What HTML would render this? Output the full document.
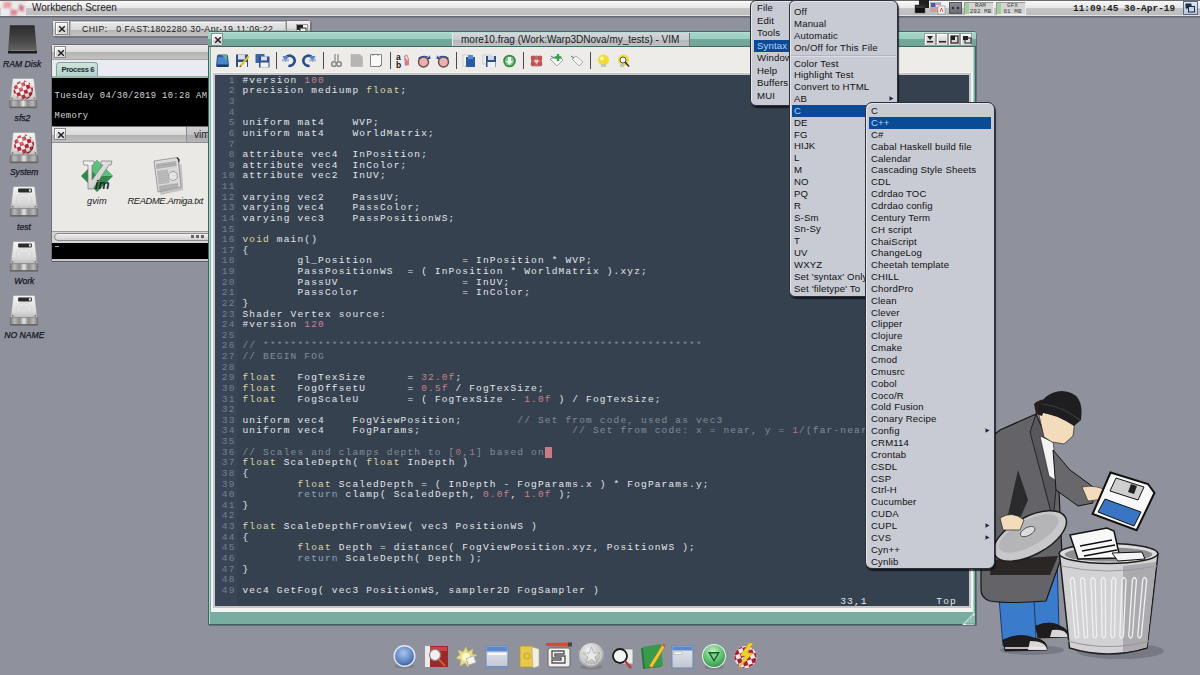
<!DOCTYPE html><html><head><meta charset="utf-8"><style>
*{box-sizing:border-box;margin:0;padding:0}
html,body{width:1200px;height:675px;overflow:hidden;background:#8f919c;font-family:"Liberation Sans",sans-serif;font-size:10px;color:#1a1a1a}
.a{position:absolute}
.topbar{left:0;top:0;width:1200px;height:18px;background:linear-gradient(#6a6a6a 0,#6a6a6a 1px,#fcfcfc 1px,#f2f2f2 3px,#e8e8e8 8px,#c6c6c6 8px,#bdbdbd 15px,#e2e2e2 15px,#e2e2e2 16px,#5e5f66 16px,#6e6f78 17px,#858791 18px)}
.code{font-family:"Liberation Mono",monospace;white-space:pre;color:#e4e6e8}
.gbar{background:linear-gradient(#eeeeee 0,#e2e2e2 45%,#b9b9b9 55%,#c4c4c4 100%);border:1px solid #6c6c6c;border-radius:2px}
.closeg{background:linear-gradient(#f6f6f6,#e2e2e2 50%,#d2d2d2 51%,#dedede);border:1px solid #8a8a8a;box-shadow:inset 1px 1px 0 #fff}

.tbar{background:linear-gradient(#3f6b62 0,#3f6b62 1px,#bfe8de 1px,#a6d6ca 2px,#9acdc0 8px,#74a99c 8px,#6fa597 15px,#3e6a60 15px,#3e6a60 16px)}
.menu{background:#c9ccd4;border:1px solid #3a3c44;border-radius:7px;box-shadow:2px 2px 0 rgba(0,0,0,.35)}
.mi{position:absolute;left:0;right:0;height:12px;line-height:12px;font-size:10px;color:#1e1e1e;white-space:pre}
.hl{background:#0a4a96;color:#dfe8ff}
</style></head><body><div class="a topbar"></div><svg class="a" style="left:0;top:0" width="26" height="16" viewBox="0 0 26 16"><defs><filter id="lgb"><feGaussianBlur stdDeviation="0.8"/></filter></defs><rect x="1" y="1" width="25" height="15" fill="#efe6ea"/><g filter="url(#lgb)"><path d="M4 2 L12 2 L11 8.5 L3 8.5 Z" fill="#eba1a2"/><path d="M12 2 L19 3 L18.5 9.5 L11 8.5 Z" fill="#e6f0ec"/><path d="M19 4 L24 6 L23.5 12.5 L18.5 10 Z" fill="#c97a8c"/><path d="M1 8.5 L10.5 8.5 L10 15.5 L1 15.5 Z" fill="#e8eef0"/><path d="M10.5 9 L18 10 L17 15.5 L10 15.5 Z" fill="#d98a94"/><path d="M18 10 L23.5 12.5 L23 15.5 L17 15.5 Z" fill="#ece6ea"/></g></svg><div class="a" style="left:32px;top:2px;font-size:10px;line-height:12px;color:#222">Workbench Screen</div><svg class="a" style="left:913px;top:0px" width="18" height="15" viewBox="0 0 18 15"><rect x="6" y="0" width="10" height="8" fill="#1e1e1e"/><rect x="2" y="5" width="10" height="8" fill="#111" stroke="#555" stroke-width="0.5"/><rect x="3" y="6" width="8" height="2" fill="#3a3a3a"/></svg><svg class="a" style="left:930px;top:2px" width="16" height="13" viewBox="0 0 16 13"><rect x="0.5" y="0.5" width="10" height="9" fill="#e8e8f0" stroke="#888" stroke-width="0.5"/><rect x="1" y="1" width="4.5" height="4" fill="#3f5fa8"/><g fill="#c94a55"><rect x="5.5" y="1.5" width="5" height="1"/><rect x="1" y="5.5" width="9.5" height="1"/><rect x="1" y="7.5" width="9.5" height="1"/></g><rect x="8" y="4" width="7" height="8" fill="#f2f2f2" stroke="#777" stroke-width="0.5"/><path d="M10 10 L11.5 6 L13 10" stroke="#c33" fill="none" stroke-width="0.8"/></svg><div class="a" style="left:949px;top:2px;width:13px;height:12px;background:linear-gradient(#8a8c94,#6b6d75);border:1px solid #55575e"></div><svg class="a" style="left:950px;top:3px" width="11" height="10"><circle cx="3" cy="5" r="1.2" fill="#2c2e34"/><circle cx="8" cy="5" r="1.2" fill="#2c2e34"/></svg><div class="a" style="left:964px;top:2px;width:30px;height:13px;background:#d4d4d4;border:1px solid #9a9a9a;border-right-color:#eee;border-bottom-color:#eee"></div><div class="a" style="left:965px;top:3px;width:4px;height:11px;background:#9fd196"></div><div class="a" style="left:967px;top:2.5px;width:27px;text-align:center;font-family:'Liberation Mono',monospace;font-size:6px;line-height:6px;color:#3a3a3a;white-space:pre">RAM<br>292 MB</div><div class="a" style="left:996px;top:2px;width:30px;height:13px;background:#d4d4d4;border:1px solid #9a9a9a;border-right-color:#eee;border-bottom-color:#eee"></div><div class="a" style="left:997px;top:3px;width:4px;height:11px;background:#9fd196"></div><div class="a" style="left:999px;top:2.5px;width:27px;text-align:center;font-family:'Liberation Mono',monospace;font-size:6px;line-height:6px;color:#3a3a3a;white-space:pre">GFX<br>61 MB</div><div class="a code" style="left:1073px;top:2.5px;font-size:9.4px;line-height:11px;color:#1e1e1e;font-weight:bold;letter-spacing:0.05px">11:09:45 30-Apr-19</div><div class="a" style="left:1183px;top:1px;width:15px;height:14px;background:linear-gradient(#dfe6f0,#b9c5d8);border:1px solid #5a6a88"></div><svg class="a" style="left:1185px;top:3px" width="11" height="10"><rect x="0.5" y="0.5" width="6" height="5" fill="#1e2a40"/><rect x="3.5" y="3.5" width="6" height="5.5" fill="#c7d3e6" stroke="#1e2a40" stroke-width="1"/></svg><svg width="0" height="0" style="position:absolute"><defs><linearGradient id="hddg" x1="0" y1="0" x2="0" y2="1"><stop offset="0" stop-color="#f4f4f4"/><stop offset="0.7" stop-color="#dcdcdc"/><stop offset="1" stop-color="#bdbdbd"/></linearGradient><linearGradient id="hddf" x1="0" y1="0" x2="1" y2="0"><stop offset="0" stop-color="#707070"/><stop offset="0.15" stop-color="#b8b8b8"/><stop offset="0.35" stop-color="#8c8c8c"/><stop offset="0.5" stop-color="#e8e8e8"/><stop offset="0.65" stop-color="#8c8c8c"/><stop offset="0.85" stop-color="#b8b8b8"/><stop offset="1" stop-color="#707070"/></linearGradient><linearGradient id="ramg" x1="0" y1="0" x2="0" y2="1"><stop offset="0" stop-color="#2a2a2a"/><stop offset="0.6" stop-color="#4a4a4a"/><stop offset="0.95" stop-color="#666"/><stop offset="1" stop-color="#222"/></linearGradient><radialGradient id="ballshade" cx="0.35" cy="0.3" r="0.75"><stop offset="0" stop-color="#fff" stop-opacity="0.55"/><stop offset="0.5" stop-color="#fff" stop-opacity="0"/><stop offset="1" stop-color="#300" stop-opacity="0.45"/></radialGradient><clipPath id="ballclip"><circle cx="15" cy="12.5" r="10"/></clipPath><symbol id="hdd" viewBox="0 0 30 32"><path d="M4 1.5 Q4 0.5 5 0.5 H25 Q26 0.5 26 1.5 L28.5 23 H1.5 Z" fill="url(#hddg)" stroke="#9a9a9a" stroke-width="0.6"/><rect x="0.8" y="23" width="28.4" height="8" rx="1" fill="url(#hddf)" stroke="#777" stroke-width="0.6"/><rect x="1.5" y="29.5" width="27" height="1.5" fill="#666"/><circle cx="3.5" cy="21" r="0.9" fill="#777"/><circle cx="26.5" cy="21" r="0.9" fill="#777"/></symbol><symbol id="ball" viewBox="0 0 30 32"><circle cx="15" cy="12.5" r="10" fill="#f3eded"/><g clip-path="url(#ballclip)" transform="rotate(-20 15 12.5)"><rect x="3" y="1" width="4" height="4" fill="#b0202c"/><rect x="3" y="9" width="4" height="4" fill="#b0202c"/><rect x="3" y="17" width="4" height="4" fill="#b0202c"/><rect x="3" y="25" width="4" height="4" fill="#b0202c"/><rect x="7" y="5" width="4" height="4" fill="#b0202c"/><rect x="7" y="13" width="4" height="4" fill="#b0202c"/><rect x="7" y="21" width="4" height="4" fill="#b0202c"/><rect x="11" y="1" width="4" height="4" fill="#b0202c"/><rect x="11" y="9" width="4" height="4" fill="#b0202c"/><rect x="11" y="17" width="4" height="4" fill="#b0202c"/><rect x="11" y="25" width="4" height="4" fill="#b0202c"/><rect x="15" y="5" width="4" height="4" fill="#b0202c"/><rect x="15" y="13" width="4" height="4" fill="#b0202c"/><rect x="15" y="21" width="4" height="4" fill="#b0202c"/><rect x="19" y="1" width="4" height="4" fill="#b0202c"/><rect x="19" y="9" width="4" height="4" fill="#b0202c"/><rect x="19" y="17" width="4" height="4" fill="#b0202c"/><rect x="19" y="25" width="4" height="4" fill="#b0202c"/><rect x="23" y="5" width="4" height="4" fill="#b0202c"/><rect x="23" y="13" width="4" height="4" fill="#b0202c"/><rect x="23" y="21" width="4" height="4" fill="#b0202c"/><rect x="27" y="1" width="4" height="4" fill="#b0202c"/><rect x="27" y="9" width="4" height="4" fill="#b0202c"/><rect x="27" y="17" width="4" height="4" fill="#b0202c"/><rect x="27" y="25" width="4" height="4" fill="#b0202c"/></g><circle cx="15" cy="12.5" r="10" fill="url(#ballshade)"/></symbol></defs></svg><svg class="a" style="left:7px;top:25px" width="31" height="29" viewBox="0 0 31 29"><path d="M3 0.3 H27.5 L30 27.5 H1 Z" fill="url(#ramg)"/><path d="M1 26 H30 V28.5 H1Z" fill="#1c1c1c"/><path d="M4 25.5 H27" stroke="#8a8a8a" stroke-width="0.8"/></svg><svg class="a" style="left:7.5px;top:78px" width="30.5" height="31" viewBox="0 0 30 32"><use href="#hdd" x="0" y="0" width="30" height="32"/><use href="#ball" x="0" y="0" width="30" height="32"/></svg><svg class="a" style="left:9px;top:131.5px" width="30" height="32" viewBox="0 0 30 32"><use href="#hdd" x="0" y="0" width="30" height="32"/><use href="#ball" x="0" y="0" width="30" height="32"/></svg><svg class="a" style="left:9px;top:186px" width="30" height="31.5" viewBox="0 0 30 32"><use href="#hdd" x="0" y="0" width="30" height="32"/><rect x="9" y="2.5" width="14" height="4" rx="1" fill="#2a2a2a"/><rect x="20" y="3.3" width="2" height="2.4" fill="#ddd"/><ellipse cx="15" cy="14" rx="8" ry="6" fill="none" stroke="#d0d0d0" stroke-width="0.8"/><path d="M12 16 V11 M15 16 V10 M18 16 V11" stroke="#cfcfcf" stroke-width="0.8"/></svg><svg class="a" style="left:9px;top:240.5px" width="30" height="31.5" viewBox="0 0 30 32"><use href="#hdd" x="0" y="0" width="30" height="32"/><rect x="9" y="2.5" width="14" height="4" rx="1" fill="#2a2a2a"/><rect x="20" y="3.3" width="2" height="2.4" fill="#ddd"/><ellipse cx="15" cy="14" rx="8" ry="6" fill="none" stroke="#d0d0d0" stroke-width="0.8"/><path d="M12 16 V11 M15 16 V10 M18 16 V11" stroke="#cfcfcf" stroke-width="0.8"/></svg><svg class="a" style="left:9px;top:295px" width="30" height="31.5" viewBox="0 0 30 32"><use href="#hdd" x="0" y="0" width="30" height="32"/><rect x="9" y="2.5" width="14" height="4" rx="1" fill="#2a2a2a"/><rect x="20" y="3.3" width="2" height="2.4" fill="#ddd"/><ellipse cx="15" cy="14" rx="8" ry="6" fill="none" stroke="#d0d0d0" stroke-width="0.8"/><path d="M12 16 V11 M15 16 V10 M18 16 V11" stroke="#cfcfcf" stroke-width="0.8"/></svg><div class="a" style="left:-17.8px;width:80px;top:59.2px;text-align:center;font-size:8.6px;line-height:10px;font-style:italic;color:#141820;white-space:pre;-webkit-text-stroke:0.25px #141820">RAM Disk</div><div class="a" style="left:-17.5px;width:80px;top:113.0px;text-align:center;font-size:8.6px;line-height:10px;font-style:italic;color:#141820;white-space:pre;-webkit-text-stroke:0.25px #141820">sfs2</div><div class="a" style="left:-15.8px;width:80px;top:167.2px;text-align:center;font-size:8.6px;line-height:10px;font-style:italic;color:#141820;white-space:pre;-webkit-text-stroke:0.25px #141820">System</div><div class="a" style="left:-16px;width:80px;top:221.5px;text-align:center;font-size:8.6px;line-height:10px;font-style:italic;color:#141820;white-space:pre;-webkit-text-stroke:0.25px #141820">test</div><div class="a" style="left:-15.7px;width:80px;top:275.8px;text-align:center;font-size:8.6px;line-height:10px;font-style:italic;color:#141820;white-space:pre;-webkit-text-stroke:0.25px #141820">Work</div><div class="a" style="left:-15.7px;width:80px;top:330.4px;text-align:center;font-size:8.6px;line-height:10px;font-style:italic;color:#141820;white-space:pre;-webkit-text-stroke:0.25px #141820">NO NAME</div><div class="a" style="left:52px;top:20px;width:259px;height:17px;background:#b9b9bb;border:1px solid #77777d;border-radius:3px;box-shadow:1px 1px 0 rgba(50,50,60,.3)"></div><div class="a" style="left:53px;top:21px;width:17px;height:15px;background:linear-gradient(#efefef,#dadada 50%,#c4c4c4 51%,#d2d2d2);border-right:1px solid #8a8a8a"></div><div class="a closeg" style="left:55px;top:22px;width:13px;height:13px"><svg style="position:absolute;left:1.5px;top:1.5px" width="8" height="8" viewBox="0 0 10 10"><path d="M1.5 1.5 L8.5 8.5 M8.5 1.5 L1.5 8.5" stroke="#1e1e1e" stroke-width="1.8"/></svg></div><div class="a" style="left:71px;top:22px;width:214px;height:14px;background:linear-gradient(#e6e6e6,#d9d9d9 50%,#b5b5b5 51%,#c3c3c3);border-top:1px solid #f6f6f6"></div><div class="a" style="left:82px;top:23.5px;font-size:8.7px;line-height:11px;color:#1b1b1b;white-space:pre;letter-spacing:0.49px">CHIP:   0 FAST:1802280 30-Apr-19 11:09:22</div><div class="a" style="left:286px;top:21px;width:24px;height:15px;background:linear-gradient(#efefef,#dadada 50%,#c4c4c4 51%,#d2d2d2);border-left:1px solid #8a8a8a"></div><div class="a" style="left:296px;top:24px;width:12px;height:11px;background:#f0f0f0;border:1px solid #999"></div><svg class="a" style="left:297px;top:25px" width="10" height="9"><rect x="0" y="0" width="6" height="5" fill="#222"/><rect x="3" y="3" width="6" height="5" fill="#eee" stroke="#333" stroke-width="1"/></svg><div class="a" style="left:51px;top:44px;width:165px;height:217px;background:#c5c5c8;border:1px solid #6e6e74;border-radius:3px 3px 0 0;box-shadow:1px 1px 0 rgba(50,50,60,.3)"></div><div class="a" style="left:52px;top:45px;width:163px;height:14px;background:linear-gradient(#eaeaea,#dcdcdc 50%,#b3b3b3 51%,#c2c2c2)"></div><div class="a closeg" style="left:54px;top:46px;width:12px;height:12px"><svg style="position:absolute;left:1.5px;top:1.5px" width="8" height="8" viewBox="0 0 10 10"><path d="M1.5 1.5 L8.5 8.5 M8.5 1.5 L1.5 8.5" stroke="#1e1e1e" stroke-width="1.8"/></svg></div><div class="a" style="left:52px;top:59px;width:163px;height:19px;background:#e9ebf0;border-top:1px solid #a5a5a5"></div><div class="a" style="left:56px;top:62px;width:42px;height:16px;background:linear-gradient(#cfe3df,#afcfc8);border:1px solid #7fa49c;border-bottom:none;border-radius:4px 4px 0 0"></div><div class="a" style="left:61.5px;top:64.5px;font-size:7.6px;line-height:10px;font-weight:bold;color:#1b2b2b;letter-spacing:-0.35px;white-space:pre">Process 6</div><div class="a" style="left:52px;top:76px;width:163px;height:2px;background:#93b8b0"></div><div class="a" style="left:52px;top:78px;width:163px;height:48px;background:#000"></div><div class="a code" style="left:54.5px;top:90.8px;font-size:8.8px;line-height:10px;letter-spacing:0.38px;color:#d6d6d6">Tuesday 04/30/2019 10:28 AM</div><div class="a code" style="left:54.5px;top:111.3px;font-size:8.8px;line-height:10px;letter-spacing:0.38px;color:#d6d6d6">Memory</div><div class="a" style="left:51px;top:126px;width:165px;height:135px;background:#b8b8bb;border:1px solid #6e6e74;border-radius:3px 3px 0 0;box-shadow:1px 1px 0 rgba(50,50,60,.35)"></div><div class="a" style="left:52px;top:127px;width:134px;height:15px;background:linear-gradient(#e8e8e8,#dadada 50%,#b0b0b0 51%,#c0c0c0)"></div><div class="a closeg" style="left:54px;top:128px;width:12px;height:12px"><svg style="position:absolute;left:1.5px;top:1.5px" width="8" height="8" viewBox="0 0 10 10"><path d="M1.5 1.5 L8.5 8.5 M8.5 1.5 L1.5 8.5" stroke="#1e1e1e" stroke-width="1.8"/></svg></div><div class="a" style="left:186px;top:127px;width:29px;height:15px;background:linear-gradient(#cfcfd2,#c3c3c6 50%,#aaaaae 51%,#b4b4b8);border-left:1px solid #8d8d90"></div><div class="a" style="left:194px;top:129px;font-size:10px;line-height:12px;color:#1b1b1b">vim</div><div class="a" style="left:52px;top:142px;width:163px;height:89px;background:#ebe9e6;border-top:1px solid #8f8f8f"></div><div class="a" style="left:52px;top:231px;width:163px;height:12px;background:#d4d4d6;border-top:1px solid #9a9a9a"></div><div class="a" style="left:54px;top:233px;width:161px;height:8px;background:linear-gradient(#f2f2f2,#cfcfcf);border:1px solid #8b8b8b;border-radius:4px"></div><div class="a" style="left:191px;top:235px;width:14px;height:3px;background:repeating-linear-gradient(90deg,#666 0,#666 3px,transparent 3px,transparent 5px)"></div><div class="a" style="left:52px;top:243px;width:163px;height:16px;background:#000"></div><div class="a" style="left:55px;top:246px;width:4px;height:1px;background:#aaa"></div><div class="a" style="left:52px;top:259px;width:163px;height:2px;background:#c9c9cc"></div><svg class="a" style="left:79px;top:158px" width="36" height="36" viewBox="0 0 36 36"><defs><linearGradient id="vg" x1="0" y1="0" x2="1" y2="1"><stop offset="0" stop-color="#fafafa"/><stop offset="1" stop-color="#b8b8b8"/></linearGradient></defs><path d="M18 2 L34 18 L18 34 L2 18 Z" fill="#2f8a4a"/><path d="M18 2 L34 18 L18 18 L10 10 Z" fill="#5cc07a"/><path d="M4 3 H15 L15 7 L13 7 L13 22 L24 7 L22 7 L22 3 H33 L32 7 L30 7 L14 31 L9 31 L9 7 L5 7 Z" fill="url(#vg)" stroke="#7a7a7a" stroke-width="0.7"/><text x="16" y="31" font-family="Liberation Sans" font-style="italic" font-weight="bold" font-size="12.5" fill="#1e2a22">im</text></svg><div class="a" style="left:87px;top:195.5px;font-size:9.3px;line-height:11px;font-style:italic;color:#222">gvim</div><svg class="a" style="left:151px;top:156px" width="32" height="40" viewBox="0 0 32 40"><path d="M3 5 L26 1.5 L27 6 L29 8 L31 33 L8 38 Z" fill="#7a7a7a" opacity="0.35" transform="translate(1.5 1)"/><path d="M3 5 L26 1.5 L28 4 L27.5 6 L30 31 L7 36 Z" fill="#dcdcdc" stroke="#8a8a8a" stroke-width="0.8"/><path d="M5 8 L25 5 L25.5 10 L5.5 13 Z" fill="#a8a8a8"/><path d="M6 15 L17 13.5 L18.5 27 L7.5 28.5 Z" fill="#b4b4b4"/><circle cx="22" cy="20" r="4.5" fill="#e8e8e8" stroke="#9a9a9a" stroke-width="1"/><path d="M8 30 L27 27 L27.5 32 L8.5 35 Z" fill="#aaaaaa"/><g stroke="#c8c8c8" stroke-width="0.5"><path d="M6.0 9.0 L26.0 6.0"/><path d="M6.1 11.6 L26.2 8.6"/><path d="M6.2 14.2 L26.4 11.2"/><path d="M6.3 16.8 L26.6 13.8"/><path d="M6.4 19.4 L26.8 16.4"/><path d="M6.5 22.0 L27.0 19.0"/><path d="M6.6 24.6 L27.2 21.6"/><path d="M6.7 27.2 L27.4 24.2"/><path d="M6.8 29.8 L27.6 26.8"/><path d="M6.9 32.400000000000006 L27.8 29.400000000000002"/></g><path d="M26 1.5 L28 4 L27.5 6" fill="none" stroke="#333" stroke-width="1.4"/></svg><div class="a" style="left:127.5px;top:195.5px;font-size:9.3px;line-height:11px;font-style:italic;color:#222;letter-spacing:-0.35px;white-space:pre">README.Amiga.txt</div><div class="a" style="left:208px;top:31px;width:768px;height:594px;background:#78ad9f;border:1px solid #3c665d;border-radius:3px 3px 0 0;box-shadow:1px 1px 0 rgba(40,40,50,.35)"></div><div class="a tbar" style="left:208px;top:31px;width:768px;height:16px;border-radius:3px 3px 0 0"></div><div class="a" style="left:209px;top:47px;width:1px;height:577px;background:#a9d5ca"></div><div class="a" style="left:973px;top:47px;width:1px;height:577px;background:#a9d5ca"></div><div class="a closeg" style="left:211px;top:33px;width:12px;height:13px"><svg style="position:absolute;left:1.5px;top:1.5px" width="8" height="8" viewBox="0 0 10 10"><path d="M1.5 1.5 L8.5 8.5 M8.5 1.5 L1.5 8.5" stroke="#1e1e1e" stroke-width="1.8"/></svg></div><div class="a" style="left:452px;top:33px;width:238px;height:13px;background:linear-gradient(#d6d7dc,#c9cace 50%,#b4b6bb 51%,#bfc1c5);border-left:1px solid #e8e8ea;border-right:1px solid #777"></div><div class="a" style="left:461px;top:34px;font-size:10px;line-height:12px;color:#1b1b1b;white-space:pre">more10.frag (Work:Warp3DNova/my_tests) - VIM</div><div class="a" style="left:924px;top:33px;width:12px;height:13px;background:linear-gradient(#f2f2f2,#dedede 50%,#d0d0d0 51%,#dadada);border:1px solid #9a9a9a;box-shadow:inset 1px 1px 0 #fff"></div><div class="a" style="left:936px;top:33px;width:12px;height:13px;background:linear-gradient(#f2f2f2,#dedede 50%,#d0d0d0 51%,#dadada);border:1px solid #9a9a9a;box-shadow:inset 1px 1px 0 #fff"></div><div class="a" style="left:948px;top:33px;width:12px;height:13px;background:linear-gradient(#f2f2f2,#dedede 50%,#d0d0d0 51%,#dadada);border:1px solid #9a9a9a;box-shadow:inset 1px 1px 0 #fff"></div><div class="a" style="left:960px;top:33px;width:12px;height:13px;background:linear-gradient(#f2f2f2,#dedede 50%,#d0d0d0 51%,#dadada);border:1px solid #9a9a9a;box-shadow:inset 1px 1px 0 #fff"></div><svg class="a" style="left:924px;top:33px" width="50" height="13" viewBox="0 0 50 13"><path d="M3 3h6l-3 4z" fill="#222"/><rect x="3" y="8" width="6" height="1.5" fill="#222"/><rect x="15" y="8" width="7" height="1.5" fill="#222"/><rect x="27" y="3" width="7" height="7" fill="none" stroke="#222" stroke-width="1.2"/><rect x="27" y="3" width="4" height="4" fill="#222"/><rect x="41" y="5" width="6" height="5" fill="#ddd" stroke="#222" stroke-width="1"/><rect x="39" y="3" width="5" height="4" fill="#222"/></svg><div class="a" style="left:211px;top:47px;width:762px;height:26px;background:#eeece9;border-bottom:1px solid #b8b8b8"></div><div class="a" style="left:211px;top:72px;width:762px;height:540px;background:#f3f3f3"></div><div class="a" style="left:213px;top:73px;width:758px;height:535px;background:#c7c7c7"></div><div class="a" style="left:215px;top:75px;width:754px;height:531px;background:#364150"></div><svg class="a" style="left:215px;top:53px" width="15" height="15" viewBox="0 0 15 15"><path d="M2 3 Q2 1.5 3.5 1.5 H11.5 Q13 1.5 13 3 L14 12.5 Q14 14 12.5 14 H2.5 Q1 14 1 12.5 Z" fill="#2c5a9c"/><path d="M3 4 H12 L12.8 11 H2.2Z" fill="#4a86c8"/><path d="M7 2 L12 2 L12 8 Z" fill="#5fb08a"/><rect x="2" y="12" width="11" height="2" fill="#1c3a6a"/></svg><svg class="a" style="left:235px;top:53px" width="15" height="15" viewBox="0 0 15 15"><rect x="1" y="1.5" width="12" height="12.5" fill="#2c4f8a"/><rect x="3" y="1.5" width="7" height="5" fill="#d8dde8"/><rect x="3" y="9" width="9" height="5" fill="#f0f0f0"/><path d="M5 12 L13 2.5 L14.5 4 L6.5 13.5 Z" fill="#e8c020"/><path d="M5 12 L6.5 13.5 L4.5 14Z" fill="#333"/></svg><svg class="a" style="left:255px;top:53px" width="15" height="15" viewBox="0 0 15 15"><rect x="0.5" y="1" width="9" height="9" fill="#3c64a8"/><rect x="4" y="3.5" width="10.5" height="11" fill="#2d4f8c"/><rect x="6" y="3.5" width="6" height="4" fill="#d8dde8"/><rect x="5.5" y="9.5" width="8" height="5" fill="#f2f2f2"/></svg><div class="a" style="left:275.5px;top:52px;width:1px;height:17px;background:#4a4a4a"></div><svg class="a" style="left:282px;top:53px" width="15" height="15" viewBox="0 0 15 15"><path d="M3 5 Q7 1 11 4 Q14.5 7.5 11 11.5 Q8.5 13.5 6.5 12.5" fill="none" stroke="#2a4d8c" stroke-width="2.6"/><path d="M0.5 3 L6.5 3 L3.5 9Z" fill="#5a82c0"/><rect x="0" y="6" width="7" height="2.5" fill="#8aa6d0" opacity=".7"/></svg><svg class="a" style="left:301px;top:53px" width="15" height="15" viewBox="0 0 15 15"><path d="M12 5 Q8 1 4 4 Q0.5 7.5 4 11.5 Q6.5 13.5 8.5 12.5" fill="none" stroke="#2a4d8c" stroke-width="2.6"/><path d="M14.5 3 L8.5 3 L11.5 9Z" fill="#5a82c0"/><rect x="8" y="6" width="7" height="2.5" fill="#8aa6d0" opacity=".7"/></svg><div class="a" style="left:322.5px;top:52px;width:1px;height:17px;background:#4a4a4a"></div><svg class="a" style="left:329px;top:53px" width="15" height="15" viewBox="0 0 15 15"><path d="M6 1 V8 M9 1 V8" stroke="#9a9a9a" stroke-width="1.5"/><circle cx="5" cy="11" r="2.3" fill="none" stroke="#8a8a8a" stroke-width="1.6"/><circle cx="10" cy="11" r="2.3" fill="none" stroke="#8a8a8a" stroke-width="1.6"/></svg><svg class="a" style="left:349px;top:53px" width="15" height="15" viewBox="0 0 15 15"><path d="M2 1.5 H11 L13.5 4 V13.5 H2Z" fill="#b5b5b5" stroke="#aaa" stroke-width="0.5"/></svg><svg class="a" style="left:369px;top:53px" width="15" height="15" viewBox="0 0 15 15"><path d="M1.5 1.5 H12.5 V12 L11 13.5 H1.5Z" fill="#fafafa" stroke="#777" stroke-width="0.9"/><path d="M11 13.5 L12.5 12 H11Z" fill="#333"/><path d="M4 1 V3 M9 1 V3" stroke="#777" stroke-width="0.8"/></svg><div class="a" style="left:389.5px;top:52px;width:1px;height:17px;background:#4a4a4a"></div><svg class="a" style="left:396px;top:53px" width="15" height="15" viewBox="0 0 15 15"><text x="0" y="7" font-family="Liberation Sans" font-weight="bold" font-size="8.5" fill="#111">a</text><text x="0" y="14.5" font-family="Liberation Sans" font-weight="bold" font-size="8.5" fill="#111">b</text><path d="M8 3 L11 1.5 L13 6 L13 12 L9 13 Z" fill="#d67d87"/><path d="M9 4 L11 3 L12 8 Z" fill="#f5f5f5"/></svg><svg class="a" style="left:416px;top:53px" width="15" height="15" viewBox="0 0 15 15"><circle cx="7.5" cy="9" r="5" fill="#e8b0b0" stroke="#6a4a4a" stroke-width="1.4"/><path d="M2 5 Q7 1 13 4 L14 2 L14.5 6 L10.5 6 L12 4.5 Q7 2.5 3 6Z" fill="#2a4d9c"/></svg><svg class="a" style="left:436px;top:53px" width="15" height="15" viewBox="0 0 15 15"><circle cx="7.5" cy="9" r="5" fill="#e8b0b0" stroke="#6a4a4a" stroke-width="1.4"/><path d="M13 5 Q8 1 2 4 L1 2 L0.5 6 L4.5 6 L3 4.5 Q8 2.5 12 6Z" fill="#2a4d9c"/></svg><div class="a" style="left:456px;top:52px;width:1px;height:17px;background:#4a4a4a"></div><svg class="a" style="left:462px;top:53px" width="15" height="15" viewBox="0 0 15 15"><rect x="1" y="2" width="8" height="11" fill="#f2f2f2" stroke="#aaa" stroke-width="0.5"/><rect x="4" y="4" width="9" height="10" fill="#2c5aa0"/><rect x="6" y="2" width="5" height="4" fill="#5a8ad0"/></svg><svg class="a" style="left:482px;top:53px" width="15" height="15" viewBox="0 0 15 15"><rect x="1" y="2" width="8" height="9" fill="#eee" stroke="#aaa" stroke-width="0.5"/><rect x="4" y="3" width="10" height="11" fill="#2d4f8c"/><rect x="6" y="3" width="6" height="4" fill="#d0d6e2"/><rect x="5.5" y="9" width="8" height="5" fill="#f2f2f2"/></svg><svg class="a" style="left:502px;top:53px" width="15" height="15" viewBox="0 0 15 15"><circle cx="7.5" cy="8" r="6.3" fill="#3a8a4c"/><circle cx="7.5" cy="8" r="4.5" fill="#7cc88a"/><path d="M6 4 H9 V8 H11 L7.5 12 L4 8 H6Z" fill="#e8f8ea"/></svg><div class="a" style="left:522.5px;top:52px;width:1px;height:17px;background:#4a4a4a"></div><svg class="a" style="left:529px;top:53px" width="15" height="15" viewBox="0 0 15 15"><circle cx="7.5" cy="8" r="5.5" fill="#c86a6a"/><circle cx="4" cy="5" r="2.4" fill="#b55"/><circle cx="11" cy="5" r="2.4" fill="#b55"/><circle cx="4" cy="11" r="2.4" fill="#b55"/><circle cx="11" cy="11" r="2.4" fill="#b55"/><path d="M7.5 11 L5 8 Q5 6 7.5 7 Q10 6 10 8Z" fill="#f2c8c8"/></svg><svg class="a" style="left:549px;top:53px" width="15" height="15" viewBox="0 0 15 15"><path d="M1 6 L8 13 L14 7 L10 3 Z" fill="#f5f5f5" stroke="#999" stroke-width="0.8"/><path d="M9 1 V8 M5.5 4.5 H12.5" stroke="#3aa050" stroke-width="2.4"/><path d="M2 3 L5 5" stroke="#444" stroke-width="0.8"/></svg><svg class="a" style="left:569px;top:53px" width="15" height="15" viewBox="0 0 15 15"><path d="M3 6 L10 13 L14 9 L7 3 Z" fill="#f5f5f5" stroke="#999" stroke-width="0.8"/><path d="M2 3 L5 5" stroke="#444" stroke-width="0.8"/></svg><div class="a" style="left:589.5px;top:52px;width:1px;height:17px;background:#4a4a4a"></div><svg class="a" style="left:596px;top:53px" width="15" height="15" viewBox="0 0 15 15"><circle cx="7.5" cy="7" r="5.5" fill="#f2dc3a"/><circle cx="6" cy="5.5" r="2" fill="#fff6a0"/><rect x="5" y="11" width="5" height="3" fill="#c8c8b0"/></svg><svg class="a" style="left:616px;top:53px" width="15" height="15" viewBox="0 0 15 15"><circle cx="7.5" cy="7" r="5.5" fill="#f2dc3a"/><circle cx="7" cy="7" r="3" fill="#fff" stroke="#555" stroke-width="1"/><path d="M9 9 L13 13.5" stroke="#333" stroke-width="1.6"/><rect x="4" y="11" width="4" height="3" fill="#c8c8b0"/></svg><svg class="a" style="left:962px;top:613px" width="13" height="12"><path d="M12 0.5 V11.5 H1 Z" fill="#8fc2b4" stroke="#e8f4f0" stroke-width="1"/><path d="M12 3 V11 H4" fill="none" stroke="#5a8a7e" stroke-width="0.8"/></svg><div class="a" style="left:215px;top:75px;width:22px;height:531px;background:#394556"></div><div class="a code" id="code" style="left:215.0px;top:75.8px;width:754px;height:531px;overflow:hidden;font-size:9.5px;line-height:10.627px;letter-spacing:1.17px"><div style="height:10.627px"><span style="color:#74808c">  1 </span>#version <span style="color:#c9808c">100</span></div><div style="height:10.627px"><span style="color:#74808c">  2 </span>precision mediump <span style="color:#ddd6a0">float</span>;</div><div style="height:10.627px"><span style="color:#74808c">  3 </span></div><div style="height:10.627px"><span style="color:#74808c">  4 </span></div><div style="height:10.627px"><span style="color:#74808c">  5 </span>uniform mat4    WVP;</div><div style="height:10.627px"><span style="color:#74808c">  6 </span>uniform mat4    WorldMatrix;</div><div style="height:10.627px"><span style="color:#74808c">  7 </span></div><div style="height:10.627px"><span style="color:#74808c">  8 </span>attribute vec4  InPosition;</div><div style="height:10.627px"><span style="color:#74808c">  9 </span>attribute vec4  InColor;</div><div style="height:10.627px"><span style="color:#74808c"> 10 </span>attribute vec2  InUV;</div><div style="height:10.627px"><span style="color:#74808c"> 11 </span></div><div style="height:10.627px"><span style="color:#74808c"> 12 </span>varying vec2    PassUV;</div><div style="height:10.627px"><span style="color:#74808c"> 13 </span>varying vec4    PassColor;</div><div style="height:10.627px"><span style="color:#74808c"> 14 </span>varying vec3    PassPositionWS;</div><div style="height:10.627px"><span style="color:#74808c"> 15 </span></div><div style="height:10.627px"><span style="color:#74808c"> 16 </span><span style="color:#ddd6a0">void</span> main()</div><div style="height:10.627px"><span style="color:#74808c"> 17 </span>{</div><div style="height:10.627px"><span style="color:#74808c"> 18 </span>        gl_Position             = InPosition * WVP;</div><div style="height:10.627px"><span style="color:#74808c"> 19 </span>        PassPositionWS  = ( InPosition * WorldMatrix ).xyz;</div><div style="height:10.627px"><span style="color:#74808c"> 20 </span>        PassUV                  = InUV;</div><div style="height:10.627px"><span style="color:#74808c"> 21 </span>        PassColor               = InColor;</div><div style="height:10.627px"><span style="color:#74808c"> 22 </span>}</div><div style="height:10.627px"><span style="color:#74808c"> 23 </span>Shader Vertex source:</div><div style="height:10.627px"><span style="color:#74808c"> 24 </span>#version <span style="color:#c9808c">120</span></div><div style="height:10.627px"><span style="color:#74808c"> 25 </span></div><div style="height:10.627px"><span style="color:#74808c"> 26 </span><span style="color:#848c97">// ****************************************************************</span></div><div style="height:10.627px"><span style="color:#74808c"> 27 </span><span style="color:#848c97">// BEGIN FOG</span></div><div style="height:10.627px"><span style="color:#74808c"> 28 </span></div><div style="height:10.627px"><span style="color:#74808c"> 29 </span><span style="color:#ddd6a0">float</span>   FogTexSize      = <span style="color:#c9808c">32.0f</span>;</div><div style="height:10.627px"><span style="color:#74808c"> 30 </span><span style="color:#ddd6a0">float</span>   FogOffsetU      = <span style="color:#c9808c">0.5f</span> / FogTexSize;</div><div style="height:10.627px"><span style="color:#74808c"> 31 </span><span style="color:#ddd6a0">float</span>   FogScaleU       = ( FogTexSize - <span style="color:#c9808c">1.0f</span> ) / FogTexSize;</div><div style="height:10.627px"><span style="color:#74808c"> 32 </span></div><div style="height:10.627px"><span style="color:#74808c"> 33 </span>uniform vec4    FogViewPosition;        <span style="color:#848c97">// Set from code, used as vec3</span></div><div style="height:10.627px"><span style="color:#74808c"> 34 </span>uniform vec4    FogParams;                      <span style="color:#848c97">// Set from code: x = near, y = <span style="color:#b3717d">1</span>/(far-near)</span></div><div style="height:10.627px"><span style="color:#74808c"> 35 </span></div><div style="height:10.627px"><span style="color:#74808c"> 36 </span><span style="color:#848c97">// Scales and clamps depth to [<span style="color:#b3717d">0</span>,<span style="color:#b3717d">1</span>] based on</span><span style="background:#c97a87;color:#c97a87"> </span></div><div style="height:10.627px"><span style="color:#74808c"> 37 </span><span style="color:#ddd6a0">float</span> ScaleDepth( <span style="color:#ddd6a0">float</span> InDepth )</div><div style="height:10.627px"><span style="color:#74808c"> 38 </span>{</div><div style="height:10.627px"><span style="color:#74808c"> 39 </span>        <span style="color:#ddd6a0">float</span> ScaledDepth = ( InDepth - FogParams.x ) * FogParams.y;</div><div style="height:10.627px"><span style="color:#74808c"> 40 </span>        <span style="color:#93a6c4">return</span> clamp( ScaledDepth, <span style="color:#c9808c">0.0f</span>, <span style="color:#c9808c">1.0f</span> );</div><div style="height:10.627px"><span style="color:#74808c"> 41 </span>}</div><div style="height:10.627px"><span style="color:#74808c"> 42 </span></div><div style="height:10.627px"><span style="color:#74808c"> 43 </span><span style="color:#ddd6a0">float</span> ScaleDepthFromView( vec3 PositionWS )</div><div style="height:10.627px"><span style="color:#74808c"> 44 </span>{</div><div style="height:10.627px"><span style="color:#74808c"> 45 </span>        <span style="color:#ddd6a0">float</span> Depth = distance( FogViewPosition.xyz, PositionWS );</div><div style="height:10.627px"><span style="color:#74808c"> 46 </span>        <span style="color:#93a6c4">return</span> ScaleDepth( Depth );</div><div style="height:10.627px"><span style="color:#74808c"> 47 </span>}</div><div style="height:10.627px"><span style="color:#74808c"> 48 </span></div><div style="height:10.627px"><span style="color:#74808c"> 49 </span>vec4 GetFog( vec3 PositionWS, sampler2D FogSampler )</div></div><div class="a code" style="left:840.17px;top:596.52px;font-size:9.5px;line-height:10.627px;letter-spacing:1.17px">33,1</div><div class="a code" style="left:936.35px;top:596.52px;font-size:9.5px;line-height:10.627px;letter-spacing:1.17px">Top</div><svg width="0" height="0" style="position:absolute"><defs><radialGradient id="dk1" cx="0.45" cy="0.35" r="0.7"><stop offset="0" stop-color="#a9c4ea"/><stop offset="0.7" stop-color="#5a82c0"/><stop offset="1" stop-color="#33548c"/></radialGradient><radialGradient id="dk7" cx="0.4" cy="0.3" r="0.8"><stop offset="0" stop-color="#f4f4f4"/><stop offset="0.7" stop-color="#b8b8b8"/><stop offset="1" stop-color="#7a7a7a"/></radialGradient><radialGradient id="dk11" cx="0.45" cy="0.3" r="0.75"><stop offset="0" stop-color="#c6f0c6"/><stop offset="0.6" stop-color="#5cc070"/><stop offset="1" stop-color="#2f8a44"/></radialGradient><linearGradient id="dkw" x1="0" y1="0" x2="0" y2="1"><stop offset="0" stop-color="#e6e8ee"/><stop offset="1" stop-color="#c0c6d2"/></linearGradient><clipPath id="dkbc"><circle cx="11.5" cy="13" r="11"/></clipPath></defs></svg><svg class="a" style="left:392px;top:644px" width="25" height="25" viewBox="0 0 25 25"><ellipse cx="12.5" cy="22" rx="10" ry="2.5" fill="#6a6c78" opacity=".5"/><circle cx="12.5" cy="12" r="11" fill="#dfe6f2"/><circle cx="12.5" cy="12" r="9.5" fill="url(#dk1)"/></svg><svg class="a" style="left:424px;top:645px" width="25" height="24" viewBox="0 0 25 24"><rect x="4" y="1" width="20" height="21" fill="#9a2a2a"/><rect x="5" y="2" width="18" height="4" fill="#c04848"/><path d="M1 1 H6 V22 H1Z" fill="#f0e8e8"/><circle cx="11" cy="10" r="5.5" fill="#f4eeee" stroke="#888" stroke-width="1.2"/><path d="M14.5 14 L21 21" stroke="#c86a3a" stroke-width="1.8"/></svg><svg class="a" style="left:455px;top:646px" width="23" height="22" viewBox="0 0 23 22"><path d="M11 1 L13 6 L18 3 L17 8 L22 9 L18 12 L21 17 L15 16 L13 21 L10 17 L5 20 L6 14 L1 12 L5 9 L3 4 L8 6Z" fill="#e8dd8a" stroke="#c8b860" stroke-width="0.6"/><circle cx="11" cy="11" r="4" fill="#fff8c8"/><rect x="12" y="11" width="8" height="7" fill="#f4f4f4" stroke="#999" stroke-width="0.6" transform="rotate(-20 16 14)"/></svg><svg class="a" style="left:485px;top:645px" width="24" height="24" viewBox="0 0 24 24"><rect x="1" y="1" width="22" height="22" fill="url(#dkw)" stroke="#6a88b8" stroke-width="1"/><rect x="1.5" y="1.5" width="21" height="5" fill="#5a88cc"/><rect x="3" y="8" width="18" height="2" fill="#fff" opacity=".8"/><rect x="1.5" y="21" width="21" height="1.5" fill="#6a88b8"/></svg><svg class="a" style="left:518px;top:644px" width="23" height="25" viewBox="0 0 23 25"><path d="M2 2 H14 L16 4 V23 H2Z" fill="#e8c84a" stroke="#b8982a" stroke-width="0.8"/><path d="M14 3 L21 5 V22 L15 24 Z" fill="#f4f0e0" stroke="#aaa" stroke-width="0.6"/><circle cx="9" cy="12" r="3" fill="none" stroke="#b8982a" stroke-width="0.8"/></svg><svg class="a" style="left:544px;top:641px" width="30" height="28" viewBox="0 0 30 28"><rect x="4" y="7" width="22" height="19" rx="2" fill="#f0f0f0" stroke="#666" stroke-width="1"/><path d="M8 10 H20 V13 H11 V15 H21 V22 H8 V19 H17 V17 H8Z" fill="none" stroke="#555" stroke-width="1.4"/><path d="M2 2 L26 1.5 L28 3.5 L26 5.5 L2 5Z" fill="#d84a2a"/><rect x="24" y="1.5" width="4" height="4" fill="#444"/></svg><svg class="a" style="left:578px;top:643px" width="27" height="27" viewBox="0 0 27 27"><ellipse cx="13.5" cy="24" rx="11" ry="2.5" fill="#6a6c78" opacity=".5"/><circle cx="13.5" cy="12.5" r="12.5" fill="url(#dk7)"/><circle cx="13.5" cy="12.5" r="9.5" fill="none" stroke="#d8d8d8" stroke-width="1"/><path d="M13.5 4 L15.8 10 L22 10.2 L17 14 L18.8 20 L13.5 16.5 L8.2 20 L10 14 L5 10.2 L11.2 10Z" fill="#e8e8e8" stroke="#9a9a9a" stroke-width="0.6"/></svg><svg class="a" style="left:610px;top:646px" width="24" height="24" viewBox="0 0 24 24"><rect x="6" y="3" width="17" height="15" fill="#eaeaea" stroke="#888" stroke-width="0.8"/><circle cx="10" cy="10" r="7" fill="#f4f4f4" stroke="#1a1a1a" stroke-width="1.8"/><path d="M15 15 L21 22" stroke="#b83a3a" stroke-width="2.4"/></svg><svg class="a" style="left:639px;top:642px" width="27" height="28" viewBox="0 0 27 28"><path d="M2 6 L20 3 L22 25 L4 27Z" fill="#2c7a3a"/><path d="M4 5 L22 2 L24 24 L6 26Z" fill="#3a9a4c"/><path d="M10 24 L23 3 L26 5 L13 26Z" fill="#e8c83a" stroke="#8a7020" stroke-width="0.6"/><path d="M23 3 L24.5 1.5 L26.5 3 L26 5Z" fill="#c85a4a"/></svg><svg class="a" style="left:671px;top:645px" width="23" height="24" viewBox="0 0 23 24"><rect x="1" y="1" width="21" height="22" fill="url(#dkw)" stroke="#6a88b8" stroke-width="1"/><rect x="1.5" y="1.5" width="20" height="4" fill="#5a88cc"/><rect x="3" y="7" width="8" height="2.5" fill="#fafafa" stroke="#888" stroke-width="0.4"/></svg><svg class="a" style="left:701px;top:643px" width="26" height="27" viewBox="0 0 26 27"><ellipse cx="13" cy="24" rx="10" ry="2.5" fill="#6a6c78" opacity=".5"/><circle cx="13" cy="13" r="12" fill="#eaf6ea"/><circle cx="13" cy="13" r="11" fill="url(#dk11)"/><path d="M7 9 H19 L13 19Z" fill="#1c5a2a"/><path d="M9.5 10.5 H16.5 L13 16.5Z" fill="#7cd08a"/></svg><svg class="a" style="left:733px;top:642px" width="25" height="28" viewBox="0 0 25 28"><g transform="translate(1 2)"><circle cx="11.5" cy="13" r="11" fill="#f4eaea"/><g clip-path="url(#dkbc)" transform="rotate(-20 11.5 13)"><rect x="-2.0" y="-1.0" width="4.5" height="4.5" fill="#a82030"/><rect x="-2.0" y="8.0" width="4.5" height="4.5" fill="#a82030"/><rect x="-2.0" y="17.0" width="4.5" height="4.5" fill="#a82030"/><rect x="-2.0" y="26.0" width="4.5" height="4.5" fill="#a82030"/><rect x="2.5" y="3.5" width="4.5" height="4.5" fill="#a82030"/><rect x="2.5" y="12.5" width="4.5" height="4.5" fill="#a82030"/><rect x="2.5" y="21.5" width="4.5" height="4.5" fill="#a82030"/><rect x="7.0" y="-1.0" width="4.5" height="4.5" fill="#a82030"/><rect x="7.0" y="8.0" width="4.5" height="4.5" fill="#a82030"/><rect x="7.0" y="17.0" width="4.5" height="4.5" fill="#a82030"/><rect x="7.0" y="26.0" width="4.5" height="4.5" fill="#a82030"/><rect x="11.5" y="3.5" width="4.5" height="4.5" fill="#a82030"/><rect x="11.5" y="12.5" width="4.5" height="4.5" fill="#a82030"/><rect x="11.5" y="21.5" width="4.5" height="4.5" fill="#a82030"/><rect x="16.0" y="-1.0" width="4.5" height="4.5" fill="#a82030"/><rect x="16.0" y="8.0" width="4.5" height="4.5" fill="#a82030"/><rect x="16.0" y="17.0" width="4.5" height="4.5" fill="#a82030"/><rect x="16.0" y="26.0" width="4.5" height="4.5" fill="#a82030"/><rect x="20.5" y="3.5" width="4.5" height="4.5" fill="#a82030"/><rect x="20.5" y="12.5" width="4.5" height="4.5" fill="#a82030"/><rect x="20.5" y="21.5" width="4.5" height="4.5" fill="#a82030"/><rect x="25.0" y="-1.0" width="4.5" height="4.5" fill="#a82030"/><rect x="25.0" y="8.0" width="4.5" height="4.5" fill="#a82030"/><rect x="25.0" y="17.0" width="4.5" height="4.5" fill="#a82030"/><rect x="25.0" y="26.0" width="4.5" height="4.5" fill="#a82030"/></g></g><path d="M16 1 L7 14 L12 14 L5 27 L20 11 L14 11 L20 1Z" fill="#f2d030" stroke="#c89a20" stroke-width="0.6"/></svg><svg class="a" style="left:960px;top:380px" width="240" height="295" viewBox="960 380 240 295"><ellipse cx="1120" cy="651" rx="44" ry="8" fill="#777985"/><ellipse cx="1032" cy="650" rx="32" ry="5" fill="#777985"/><path d="M1028 556 L1057 556 L1059 628 L1036 632 Z" fill="#3b7bcc" stroke="#173c70" stroke-width="1"/><path d="M999 598 L1034 598 L1036 638 L1003 646 Z" fill="#3b7bcc" stroke="#173c70" stroke-width="1"/><path d="M1036 626 Q1050 620 1060 626 Q1070 630 1068 637 L1038 638 Z" fill="#1e1c1c" stroke="#111" stroke-width="0.8"/><path d="M1052 630 Q1066 628 1068 637 L1050 637Z" fill="#d8d8d8"/><path d="M1003 640 Q1020 632 1034 638 Q1048 640 1047 650 L1005 651 Z" fill="#1e1c1c" stroke="#111" stroke-width="0.8"/><path d="M1030 641 Q1046 641 1047 650 L1028 650Z" fill="#d8d8d8"/><path d="M1005 648 H1046" stroke="#eee" stroke-width="1.5"/><path d="M981 445 L1000 430 L1036 414 L1046 438 L1058 470 L1062 556 L1046 601 Q1010 604 990 601 Q981 598 981 590 Z" fill="#646468" stroke="#151515" stroke-width="1.2"/><path d="M992 560 L1058 556 L1050 575 L990 575 Z" fill="#2a2626"/><path d="M1036 414 L1030 432 L1040 470 L1053 520 L1058 470 L1046 438 Z" fill="#58585c" stroke="#151515" stroke-width="0.8"/><path d="M1018 470 L1028 500 L1015 530 L1008 515 Z" fill="#2a2a2c"/><path d="M1040 436 L1053 442 L1058 482 L1049 476 Z" fill="#f4f4f4" stroke="#222" stroke-width="0.6"/><path d="M1053 450 L1070 470 L1092 486 L1093 503 L1078 506 L1056 490 Z" fill="#68686c" stroke="#151515" stroke-width="1"/><path d="M1038 411 L1075 420 L1073 436 L1064 444 L1052 442 L1044 437 Z" fill="#f2dcbc" stroke="#222" stroke-width="0.7"/><path d="M1034 404 Q1040 398 1048 400 L1042 416 L1036 414 Z" fill="#2a1e18"/><path d="M1038 412 Q1042 392 1062 391 Q1085 392 1081 420 L1074 426 Q1056 414 1038 412 Z" fill="#1e1e20"/><path d="M1042 404 Q1062 406 1080 420" stroke="#3a3a3c" stroke-width="1.2" fill="none"/><path d="M1082 487 Q1096 484 1110 492 L1104 499 L1088 501 Z" fill="#f2dcbc" stroke="#222" stroke-width="0.6"/><path d="M1110.5 472.5 L1148 484 L1154.5 492.8 L1136.6 530.3 L1092.6 514 Z" fill="#f8f8f8" stroke="#111" stroke-width="2"/><path d="M1105 499 L1141 512 L1134 526 L1098 512 Z" fill="#3a74c4" stroke="#111" stroke-width="1"/><path d="M1116 478 L1144 487 L1138 500 L1110 491 Z" fill="#cfcfcf" stroke="#111" stroke-width="1"/><path d="M1131 484 L1137 486 L1134 494 L1128 492 Z" fill="#222"/><path d="M1059.5 554 L1069.5 648 Q1108 660 1147 648 L1158 554 Z" fill="#d2d2d4" stroke="#1e1e1e" stroke-width="1.5"/><path d="M1123 566 L1156 562 L1147 647 Q1135 651 1123 652 Z" fill="#ababaf"/><path d="M1061 566 Q1108 576 1157 566" fill="none" stroke="#9a9a9e" stroke-width="1"/><path d="M1068 641 Q1108 652 1149 641" fill="none" stroke="#9a9a9e" stroke-width="1.2"/><g fill="none" stroke="#f0f0f2" stroke-width="1.3"><path d="M1070.3 580 Q1072.3 575 1074.3 580 L1078.8 636 Q1077.0 640 1075.2 636 Z"/><path d="M1080.6 580 Q1082.6 575 1084.6 580 L1087.7 636 Q1085.9 640 1084.1 636 Z"/><path d="M1091.0 580 Q1093.0 575 1095.0 580 L1096.7 636 Q1094.9 640 1093.1 636 Z"/><path d="M1101.3 580 Q1103.3 575 1105.3 580 L1105.6 636 Q1103.8 640 1102.0 636 Z"/><path d="M1111.7 580 Q1113.7 575 1115.7 580 L1114.5 636 Q1112.7 640 1110.9 636 Z"/><path d="M1122.0 580 Q1124.0 575 1126.0 580 L1123.4 636 Q1121.6 640 1119.8 636 Z"/><path d="M1132.4 580 Q1134.4 575 1136.4 580 L1132.4 636 Q1130.6 640 1128.8 636 Z"/><path d="M1142.7 580 Q1144.7 575 1146.7 580 L1141.3 636 Q1139.5 640 1137.7 636 Z"/></g><ellipse cx="1108.5" cy="553.5" rx="49.3" ry="10" fill="#dcdcde" stroke="#1e1e1e" stroke-width="1.5"/><ellipse cx="1108.5" cy="554.5" rx="44" ry="7" fill="#8e8e92"/><path d="M1070 535 L1107 528 L1114 531 L1120 558 L1078 559 Z" fill="#f8f8f8" stroke="#111" stroke-width="1.5"/><path d="M1080 546 L1112 540 M1082 551 L1115 545 M1084 556 L1117 550" stroke="#111" stroke-width="1.4"/><path d="M1112 553 L1142 552 L1145 559 L1118 561 Z" fill="#f4f4f4" stroke="#111" stroke-width="1"/><g transform="rotate(-28 1030 536)"><ellipse cx="1030" cy="536" rx="40" ry="19" fill="#c8c8ca" stroke="#1e1e1e" stroke-width="1.5"/><ellipse cx="1030" cy="533" rx="33" ry="13" fill="#b5b5b8"/><ellipse cx="1030" cy="531" rx="8" ry="4" fill="#dcdcde" stroke="#444" stroke-width="0.8"/></g><path d="M1000 518 Q1012 510 1024 520 L1020 530 L1003 530 Z" fill="#f2dcbc" stroke="#222" stroke-width="0.7"/></svg><div class="a" style="left:750px;top:0px;width:48px;height:105.5px;background:#c8cbd3;border:1px solid #2e3038;border-radius:6px;box-shadow:1px 2px 1px rgba(10,12,20,.75), inset 1px 1px 0 #e2e5ea"></div><div class="a" style="left:754px;top:40px;width:36px;height:12px;background:#0b4a94"></div><div class="a" style="left:757px;top:2.40px;height:12px;line-height:12px;font-size:9.6px;letter-spacing:0.15px;color:#111;white-space:pre">File</div><div class="a" style="left:757px;top:14.90px;height:12px;line-height:12px;font-size:9.6px;letter-spacing:0.15px;color:#111;white-space:pre">Edit</div><div class="a" style="left:757px;top:27.40px;height:12px;line-height:12px;font-size:9.6px;letter-spacing:0.15px;color:#111;white-space:pre">Tools</div><div class="a" style="left:757px;top:39.90px;height:12px;line-height:12px;font-size:9.6px;letter-spacing:0.15px;color:#b8d2ff;white-space:pre">Syntax</div><div class="a" style="left:757px;top:52.40px;height:12px;line-height:12px;font-size:9.6px;letter-spacing:0.15px;color:#111;white-space:pre">Window</div><div class="a" style="left:757px;top:64.90px;height:12px;line-height:12px;font-size:9.6px;letter-spacing:0.15px;color:#111;white-space:pre">Help</div><div class="a" style="left:757px;top:77.40px;height:12px;line-height:12px;font-size:9.6px;letter-spacing:0.15px;color:#111;white-space:pre">Buffers</div><div class="a" style="left:757px;top:89.90px;height:12px;line-height:12px;font-size:9.6px;letter-spacing:0.15px;color:#111;white-space:pre">MUI</div><div class="a" style="left:789px;top:0px;width:109px;height:297px;background:#c8cbd3;border:1px solid #2e3038;border-radius:6px;box-shadow:1px 2px 1px rgba(10,12,20,.75), inset 1px 1px 0 #e2e5ea"></div><div class="a" style="left:794px;top:6.30px;height:12px;line-height:12px;font-size:9.6px;letter-spacing:0.15px;color:#111;white-space:pre">Off</div><div class="a" style="left:794px;top:18.15px;height:12px;line-height:12px;font-size:9.6px;letter-spacing:0.15px;color:#111;white-space:pre">Manual</div><div class="a" style="left:794px;top:30.00px;height:12px;line-height:12px;font-size:9.6px;letter-spacing:0.15px;color:#111;white-space:pre">Automatic</div><div class="a" style="left:794px;top:41.85px;height:12px;line-height:12px;font-size:9.6px;letter-spacing:0.15px;color:#111;white-space:pre">On/Off for This File</div><div class="a" style="left:791px;top:55px;width:105px;height:1px;background:#b2b5bd"></div><div class="a" style="left:791px;top:56px;width:105px;height:1px;background:#dadde3"></div><div class="a" style="left:792px;top:105px;width:104px;height:12px;background:#0b4a94"></div><div class="a" style="left:794px;top:57.50px;height:12px;line-height:12px;font-size:9.6px;letter-spacing:0.15px;color:#111;white-space:pre">Color Test</div><div class="a" style="left:794px;top:69.35px;height:12px;line-height:12px;font-size:9.6px;letter-spacing:0.15px;color:#111;white-space:pre">Highlight Test</div><div class="a" style="left:794px;top:81.20px;height:12px;line-height:12px;font-size:9.6px;letter-spacing:0.15px;color:#111;white-space:pre">Convert to HTML</div><div class="a" style="left:794px;top:93.05px;height:12px;line-height:12px;font-size:9.6px;letter-spacing:0.15px;color:#111;white-space:pre">AB</div><div class="a" style="left:794px;top:104.90px;height:12px;line-height:12px;font-size:9.6px;letter-spacing:0.15px;color:#b8d2ff;white-space:pre">C</div><div class="a" style="left:794px;top:116.75px;height:12px;line-height:12px;font-size:9.6px;letter-spacing:0.15px;color:#111;white-space:pre">DE</div><div class="a" style="left:794px;top:128.60px;height:12px;line-height:12px;font-size:9.6px;letter-spacing:0.15px;color:#111;white-space:pre">FG</div><div class="a" style="left:794px;top:140.45px;height:12px;line-height:12px;font-size:9.6px;letter-spacing:0.15px;color:#111;white-space:pre">HIJK</div><div class="a" style="left:794px;top:152.30px;height:12px;line-height:12px;font-size:9.6px;letter-spacing:0.15px;color:#111;white-space:pre">L</div><div class="a" style="left:794px;top:164.15px;height:12px;line-height:12px;font-size:9.6px;letter-spacing:0.15px;color:#111;white-space:pre">M</div><div class="a" style="left:794px;top:176.00px;height:12px;line-height:12px;font-size:9.6px;letter-spacing:0.15px;color:#111;white-space:pre">NO</div><div class="a" style="left:794px;top:187.85px;height:12px;line-height:12px;font-size:9.6px;letter-spacing:0.15px;color:#111;white-space:pre">PQ</div><div class="a" style="left:794px;top:199.70px;height:12px;line-height:12px;font-size:9.6px;letter-spacing:0.15px;color:#111;white-space:pre">R</div><div class="a" style="left:794px;top:211.55px;height:12px;line-height:12px;font-size:9.6px;letter-spacing:0.15px;color:#111;white-space:pre">S-Sm</div><div class="a" style="left:794px;top:223.40px;height:12px;line-height:12px;font-size:9.6px;letter-spacing:0.15px;color:#111;white-space:pre">Sn-Sy</div><div class="a" style="left:794px;top:235.25px;height:12px;line-height:12px;font-size:9.6px;letter-spacing:0.15px;color:#111;white-space:pre">T</div><div class="a" style="left:794px;top:247.10px;height:12px;line-height:12px;font-size:9.6px;letter-spacing:0.15px;color:#111;white-space:pre">UV</div><div class="a" style="left:794px;top:258.95px;height:12px;line-height:12px;font-size:9.6px;letter-spacing:0.15px;color:#111;white-space:pre">WXYZ</div><div class="a" style="left:794px;top:270.80px;height:12px;line-height:12px;font-size:9.6px;letter-spacing:0.15px;color:#111;white-space:pre">Set &#x27;syntax&#x27; Only</div><div class="a" style="left:794px;top:282.65px;height:12px;line-height:12px;font-size:9.6px;letter-spacing:0.15px;color:#111;white-space:pre">Set &#x27;filetype&#x27; To</div><svg class="a" style="left:888.5px;top:96.00px" width="5" height="5"><path d="M0.5 0.3 L4.5 2.5 L0.5 4.7Z" fill="#1b2a4a"/></svg><div class="a" style="left:865px;top:102px;width:130px;height:467px;background:#c8cbd3;border:1px solid #2e3038;border-radius:7px;box-shadow:1px 2px 1px rgba(10,12,20,.75), inset 1px 1px 0 #e2e5ea"></div><div class="a" style="left:869px;top:117px;width:122px;height:11.5px;background:#0b4a94"></div><div class="a" style="left:871px;top:105.10px;height:12px;line-height:12px;font-size:9.6px;letter-spacing:0.15px;color:#111;white-space:pre">C</div><div class="a" style="left:871px;top:116.95px;height:12px;line-height:12px;font-size:9.6px;letter-spacing:0.15px;color:#b8d2ff;white-space:pre">C++</div><div class="a" style="left:871px;top:128.81px;height:12px;line-height:12px;font-size:9.6px;letter-spacing:0.15px;color:#111;white-space:pre">C#</div><div class="a" style="left:871px;top:140.66px;height:12px;line-height:12px;font-size:9.6px;letter-spacing:0.15px;color:#111;white-space:pre">Cabal Haskell build file</div><div class="a" style="left:871px;top:152.52px;height:12px;line-height:12px;font-size:9.6px;letter-spacing:0.15px;color:#111;white-space:pre">Calendar</div><div class="a" style="left:871px;top:164.38px;height:12px;line-height:12px;font-size:9.6px;letter-spacing:0.15px;color:#111;white-space:pre">Cascading Style Sheets</div><div class="a" style="left:871px;top:176.23px;height:12px;line-height:12px;font-size:9.6px;letter-spacing:0.15px;color:#111;white-space:pre">CDL</div><div class="a" style="left:871px;top:188.09px;height:12px;line-height:12px;font-size:9.6px;letter-spacing:0.15px;color:#111;white-space:pre">Cdrdao TOC</div><div class="a" style="left:871px;top:199.94px;height:12px;line-height:12px;font-size:9.6px;letter-spacing:0.15px;color:#111;white-space:pre">Cdrdao config</div><div class="a" style="left:871px;top:211.79px;height:12px;line-height:12px;font-size:9.6px;letter-spacing:0.15px;color:#111;white-space:pre">Century Term</div><div class="a" style="left:871px;top:223.65px;height:12px;line-height:12px;font-size:9.6px;letter-spacing:0.15px;color:#111;white-space:pre">CH script</div><div class="a" style="left:871px;top:235.50px;height:12px;line-height:12px;font-size:9.6px;letter-spacing:0.15px;color:#111;white-space:pre">ChaiScript</div><div class="a" style="left:871px;top:247.36px;height:12px;line-height:12px;font-size:9.6px;letter-spacing:0.15px;color:#111;white-space:pre">ChangeLog</div><div class="a" style="left:871px;top:259.22px;height:12px;line-height:12px;font-size:9.6px;letter-spacing:0.15px;color:#111;white-space:pre">Cheetah template</div><div class="a" style="left:871px;top:271.07px;height:12px;line-height:12px;font-size:9.6px;letter-spacing:0.15px;color:#111;white-space:pre">CHILL</div><div class="a" style="left:871px;top:282.93px;height:12px;line-height:12px;font-size:9.6px;letter-spacing:0.15px;color:#111;white-space:pre">ChordPro</div><div class="a" style="left:871px;top:294.78px;height:12px;line-height:12px;font-size:9.6px;letter-spacing:0.15px;color:#111;white-space:pre">Clean</div><div class="a" style="left:871px;top:306.63px;height:12px;line-height:12px;font-size:9.6px;letter-spacing:0.15px;color:#111;white-space:pre">Clever</div><div class="a" style="left:871px;top:318.49px;height:12px;line-height:12px;font-size:9.6px;letter-spacing:0.15px;color:#111;white-space:pre">Clipper</div><div class="a" style="left:871px;top:330.35px;height:12px;line-height:12px;font-size:9.6px;letter-spacing:0.15px;color:#111;white-space:pre">Clojure</div><div class="a" style="left:871px;top:342.20px;height:12px;line-height:12px;font-size:9.6px;letter-spacing:0.15px;color:#111;white-space:pre">Cmake</div><div class="a" style="left:871px;top:354.06px;height:12px;line-height:12px;font-size:9.6px;letter-spacing:0.15px;color:#111;white-space:pre">Cmod</div><div class="a" style="left:871px;top:365.91px;height:12px;line-height:12px;font-size:9.6px;letter-spacing:0.15px;color:#111;white-space:pre">Cmusrc</div><div class="a" style="left:871px;top:377.77px;height:12px;line-height:12px;font-size:9.6px;letter-spacing:0.15px;color:#111;white-space:pre">Cobol</div><div class="a" style="left:871px;top:389.62px;height:12px;line-height:12px;font-size:9.6px;letter-spacing:0.15px;color:#111;white-space:pre">Coco/R</div><div class="a" style="left:871px;top:401.48px;height:12px;line-height:12px;font-size:9.6px;letter-spacing:0.15px;color:#111;white-space:pre">Cold Fusion</div><div class="a" style="left:871px;top:413.33px;height:12px;line-height:12px;font-size:9.6px;letter-spacing:0.15px;color:#111;white-space:pre">Conary Recipe</div><div class="a" style="left:871px;top:425.19px;height:12px;line-height:12px;font-size:9.6px;letter-spacing:0.15px;color:#111;white-space:pre">Config</div><svg class="a" style="left:985.3px;top:428.09px" width="5" height="5"><path d="M0.5 0.3 L4.5 2.5 L0.5 4.7Z" fill="#1b2a4a"/></svg><div class="a" style="left:871px;top:437.04px;height:12px;line-height:12px;font-size:9.6px;letter-spacing:0.15px;color:#111;white-space:pre">CRM114</div><div class="a" style="left:871px;top:448.90px;height:12px;line-height:12px;font-size:9.6px;letter-spacing:0.15px;color:#111;white-space:pre">Crontab</div><div class="a" style="left:871px;top:460.75px;height:12px;line-height:12px;font-size:9.6px;letter-spacing:0.15px;color:#111;white-space:pre">CSDL</div><div class="a" style="left:871px;top:472.61px;height:12px;line-height:12px;font-size:9.6px;letter-spacing:0.15px;color:#111;white-space:pre">CSP</div><div class="a" style="left:871px;top:484.46px;height:12px;line-height:12px;font-size:9.6px;letter-spacing:0.15px;color:#111;white-space:pre">Ctrl-H</div><div class="a" style="left:871px;top:496.32px;height:12px;line-height:12px;font-size:9.6px;letter-spacing:0.15px;color:#111;white-space:pre">Cucumber</div><div class="a" style="left:871px;top:508.17px;height:12px;line-height:12px;font-size:9.6px;letter-spacing:0.15px;color:#111;white-space:pre">CUDA</div><div class="a" style="left:871px;top:520.02px;height:12px;line-height:12px;font-size:9.6px;letter-spacing:0.15px;color:#111;white-space:pre">CUPL</div><svg class="a" style="left:985.3px;top:522.92px" width="5" height="5"><path d="M0.5 0.3 L4.5 2.5 L0.5 4.7Z" fill="#1b2a4a"/></svg><div class="a" style="left:871px;top:531.88px;height:12px;line-height:12px;font-size:9.6px;letter-spacing:0.15px;color:#111;white-space:pre">CVS</div><svg class="a" style="left:985.3px;top:534.78px" width="5" height="5"><path d="M0.5 0.3 L4.5 2.5 L0.5 4.7Z" fill="#1b2a4a"/></svg><div class="a" style="left:871px;top:543.74px;height:12px;line-height:12px;font-size:9.6px;letter-spacing:0.15px;color:#111;white-space:pre">Cyn++</div><div class="a" style="left:871px;top:555.59px;height:12px;line-height:12px;font-size:9.6px;letter-spacing:0.15px;color:#111;white-space:pre">Cynlib</div></body></html>
